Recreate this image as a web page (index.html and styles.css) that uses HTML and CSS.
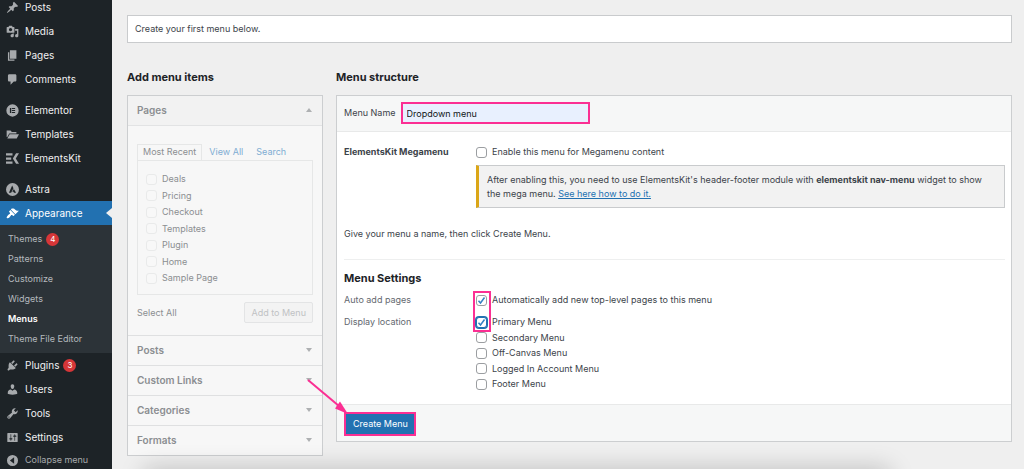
FILE: index.html
```html
<!DOCTYPE html>
<html lang="en">
<head>
<meta charset="utf-8">
<title>Menus</title>
<link rel="stylesheet" href="styles.css">
</head>
<body>
<div class="admin">
  <nav class="sidebar" aria-label="Main menu">
    <a class="nav-item" href="#"><svg class="icon" viewBox="0 0 20 20"><path d="M10.44 3.02l1.82-1.82 6.36 6.35-1.83 1.82c-1.05-.68-2.48-.57-3.41.36l-.75.75c-.92.93-1.04 2.35-.35 3.41l-1.83 1.82-2.41-2.41-2.8 2.79c-.42.42-3.38 2.71-3.8 2.29s1.86-3.39 2.28-3.81l2.79-2.79L4.1 9.36l1.83-1.82c1.05.69 2.48.57 3.4-.36l.75-.75c.93-.92 1.05-2.35.36-3.41z"/></svg>Posts</a>
    <a class="nav-item" href="#"><svg class="icon" viewBox="0 0 20 20"><path d="M13 11V4c0-.55-.45-1-1-1h-1.67L9 1H5L3.67 3H2c-.55 0-1 .45-1 1v7c0 .55.45 1 1 1h10c.55 0 1-.45 1-1zM7 4.5c1.38 0 2.5 1.12 2.5 2.5S8.38 9.5 7 9.5 4.5 8.38 4.5 7 5.62 4.5 7 4.5zM14 6h5v10.500c0 1.38-1.12 2.5-2.5 2.500S14 17.880 14 16.500s1.120-2.500 2.500-2.500c.17 0 .34.02.5.05V9h-3V6zm-4 8.050V13h2v3.500c0 1.380-1.120 2.500-2.500 2.500S7 17.880 7 16.500 8.120 14 9.500 14c.17 0 .34.02.5.05z" fill-rule="evenodd"/></svg>Media</a>
    <a class="nav-item" href="#"><svg class="icon" viewBox="0 0 20 20"><path d="M6 15V2h10v13H6zm-1 1h8v2H3V5h2v11z"/></svg>Pages</a>
    <a class="nav-item" href="#"><svg class="icon" viewBox="0 0 20 20"><path d="M5 2h9c1.100 0 2 .9 2 2v7c0 1.100-.9 2-2 2h-2l-5 5v-5H5c-1.100 0-2-.9-2-2V4c0-1.100.9-2 2-2z"/></svg>Comments</a>
    <a class="nav-item group-start" href="#"><svg class="icon" viewBox="0 0 20 20"><path fill-rule="evenodd" d="M10 .5a9.500 9.500 0 1 0 0 19a9.500 9.500 0 0 0 0-19zM6 6h2v8H6zM9 6h5v1.600H9zM9 9.200h5v1.600H9zM9 12.400h5V14H9z"/></svg>Elementor</a>
    <a class="nav-item" href="#"><svg class="icon" viewBox="0 0 20 20"><path d="M1 4h6l2 2h7v2.500H5L2 14H1zM5.600 9.500H20L16.500 16H2z"/></svg>Templates</a>
    <a class="nav-item" href="#"><svg class="icon" viewBox="0 0 20 20"><path d="M0 2h10v3.500H0zM0 8.300h8v3.500H0zM0 14.500h10V18H0zM15.500 2H20l-5 8 5 8h-4.500l-5-8z"/></svg>ElementsKit</a>
    <a class="nav-item group-start" href="#"><svg class="icon" viewBox="0 0 20 20"><path fill-rule="evenodd" d="M10 0a10 10 0 1 0 0 20a10 10 0 0 0 0-20zM9.500 4l2 4-3.600 7H4.500zM12.100 9.200L15.500 15h-3.200l-.8-1.700H9.700z"/></svg>Astra</a>
    <a class="nav-item current" href="#"><svg class="icon" viewBox="0 0 20 20"><path d="M14.480 11.060L7.410 3.990l1.500-1.500c.5-.56 2.300-.47 3.510.32 1.210.8 1.430 1.280 2.910 2.100 1.180.64 2.450 1.260 4.450.85zm-.71.71L6.700 4.700 4.930 6.470c-.39.39-.39 1.020 0 1.410l1.060 1.060c.39.39.39 1.030 0 1.420-.6.6-1.430 1.110-2.210 1.690-.35.26-.7.53-1.010.84C1.430 14.230.4 16.080 1.400 17.070c.99 1 2.840-.03 4.180-1.360.31-.31.58-.66.85-1.020.57-.78 1.080-1.610 1.690-2.210.39-.39 1.020-.39 1.410 0l1.060 1.060c.39.39 1.020.39 1.410 0z"/></svg>Appearance</a>
    <div class="submenu">
      <a href="#">Themes <span class="count">4</span></a>
      <a href="#">Patterns</a>
      <a href="#">Customize</a>
      <a href="#">Widgets</a>
      <a class="here" href="#">Menus</a>
      <a href="#">Theme File Editor</a>
    </div>
    <a class="nav-item" href="#"><svg class="icon" viewBox="0 0 20 20"><path d="M13.110 4.360L9.870 7.600 8 5.730l3.240-3.240c.35-.34 1.050-.2 1.560.32.52.51.66 1.210.31 1.550zm-8 1.770l.91-1.120 9.010 9.010-1.190.84c-.71.71-2.630 1.160-3.820 1.160H6.140L4.900 17.260c-.59.59-1.540.59-2.120 0-.59-.58-.59-1.530 0-2.120l1.240-1.240v-3.880c0-1.130.4-3.190 1.090-3.890zm7.260 3.970l3.240-3.240c.34-.35 1.040-.21 1.550.31.52.51.66 1.210.31 1.550l-3.240 3.250z"/></svg>Plugins <span class="count">3</span></a>
    <a class="nav-item" href="#"><svg class="icon" viewBox="0 0 20 20"><path d="M10 9.250c-2.270 0-2.730-3.440-2.730-3.440C7 4.020 7.820 2 9.970 2c2.160 0 2.980 2.020 2.710 3.810 0 0-.41 3.440-2.680 3.440zm0 2.570L12.720 10c2.390 0 4.520 2.330 4.520 4.530v2.490s-3.650 1.130-7.240 1.130c-3.650 0-7.240-1.130-7.240-1.130v-2.490c0-2.250 1.940-4.480 4.470-4.480z"/></svg>Users</a>
    <a class="nav-item" href="#"><svg class="icon" viewBox="0 0 20 20"><path d="M16.680 9.770c-1.340 1.340-3.300 1.670-4.950.99l-5.410 6.520c-.99.99-2.590.99-3.580 0s-.99-2.590 0-3.570l6.520-5.420c-.68-1.650-.35-3.610.99-4.950 1.280-1.280 3.120-1.620 4.720-1.060l-2.890 2.890 2.820 2.820 2.860-2.870c.53 1.580.18 3.390-1.080 4.650zM3.810 16.210c.4.39 1.040.39 1.430 0 .4-.4.4-1.040 0-1.430-.39-.4-1.030-.4-1.430 0-.39.39-.39 1.030 0 1.430z"/></svg>Tools</a>
    <a class="nav-item" href="#"><svg class="icon" viewBox="0 0 20 20"><path fill-rule="evenodd" d="M18 16V4c0-.55-.45-1-1-1H3c-.55 0-1 .45-1 1v12c0 .55.45 1 1 1h14c.55 0 1-.45 1-1zM8 11h1c.55 0 1 .45 1 1s-.45 1-1 1H8v1.500c0 .28-.22.5-.5.5s-.5-.22-.5-.5V13H6c-.55 0-1-.45-1-1s.45-1 1-1h1V5.500c0-.28.22-.5.5-.5s.5.22.5.5V11zm5-2h-1c-.55 0-1-.45-1-1s.45-1 1-1h1V5.500c0-.28.22-.5.5-.5s.5.22.5.5V7h1c.55 0 1 .45 1 1s-.45 1-1 1h-1v5.500c0 .28-.22.5-.5.5s-.5-.22-.5-.5V9z"/></svg>Settings</a>
    <button class="nav-item collapse" type="button"><svg class="icon" viewBox="0 0 20 20"><path fill-rule="evenodd" d="M10 1.500a8.500 8.500 0 1 0 0 17a8.500 8.500 0 0 0 0-17zM12.500 5v10L6 10z"/></svg>Collapse menu</button>
  </nav>

  <main class="content">
    <p class="intro">Create your first menu below.</p>
    <div class="columns">
      <section class="add-items">
        <h2>Add menu items</h2>
        <div class="accordion">
          <button class="acc-head open" type="button">Pages<span class="arrow up"></span></button>
          <div class="acc-body">
            <div class="tabs">
              <a class="tab selected" href="#">Most Recent</a>
              <a class="tab" href="#">View All</a>
              <a class="tab" href="#">Search</a>
            </div>
            <div class="page-list">
              <label><input type="checkbox" disabled>Deals</label>
              <label><input type="checkbox" disabled>Pricing</label>
              <label><input type="checkbox" disabled>Checkout</label>
              <label><input type="checkbox" disabled>Templates</label>
              <label><input type="checkbox" disabled>Plugin</label>
              <label><input type="checkbox" disabled>Home</label>
              <label><input type="checkbox" disabled>Sample Page</label>
            </div>
            <div class="acc-actions">
              <span>Select All</span>
              <button class="add-button" type="button" disabled>Add to Menu</button>
            </div>
          </div>
          <button class="acc-head" type="button">Posts<span class="arrow"></span></button>
          <button class="acc-head" type="button">Custom Links<span class="arrow"></span></button>
          <button class="acc-head" type="button">Categories<span class="arrow"></span></button>
          <button class="acc-head" type="button">Formats<span class="arrow"></span></button>
        </div>
      </section>

      <section class="structure">
        <h2>Menu structure</h2>
        <form class="panel">
          <div class="panel-head">
            <label for="menu-name">Menu Name</label>
            <input class="menu-name" id="menu-name" type="text" value="Dropdown menu">
          </div>
          <div class="panel-body">
            <div class="setting mega">
              <strong>ElementsKit Megamenu</strong>
              <div>
                <label class="check"><input type="checkbox">Enable this menu for Megamenu content</label>
                <p class="notice">After enabling this, you need to use ElementsKit's header-footer module with <b>elementskit nav-menu</b> widget to show the mega menu. <a href="#">See here how to do it.</a></p>
              </div>
            </div>
            <p class="hint">Give your menu a name, then click Create Menu.</p>
            <div class="settings">
              <h3>Menu Settings</h3>
              <div class="setting">
                <span class="legend">Auto add pages</span>
                <div class="marked">
                  <label class="check"><input type="checkbox" checked>Automatically add new top-level pages to this menu</label>
                </div>
              </div>
              <div class="setting">
                <span class="legend">Display location</span>
                <div class="locations">
                  <label class="check"><input class="focused" type="checkbox" checked>Primary Menu</label>
                  <label class="check"><input type="checkbox">Secondary Menu</label>
                  <label class="check"><input type="checkbox">Off-Canvas Menu</label>
                  <label class="check"><input type="checkbox">Logged In Account Menu</label>
                  <label class="check"><input type="checkbox">Footer Menu</label>
                </div>
              </div>
            </div>
          </div>
          <div class="panel-foot">
            <div class="create-wrap">
              <button class="create" type="button">Create Menu</button>
              <svg class="pointer" viewBox="0 0 42 36"><path d="M1 1L32 27" stroke="#fb2f93" stroke-width="2" fill="none"/><path d="M41 35L28 29.500L33 22.500z" fill="#fb2f93"/></svg>
            </div>
          </div>
        </form>
      </section>
    </div>
  </main>
</div>
</body>
</html>
```
FILE: styles.css
```css
*, *::before, *::after { box-sizing: border-box; }

body {
  margin: 0;
  height: 100vh;
  overflow: hidden;
  background: #efefef;
  color: #3c434a;
  font: 9px/14px Inter, "Liberation Sans", sans-serif;
}

h2, h3, p { margin: 0; }
button, input { font: inherit; color: inherit; }

.admin { display: flex; align-items: flex-start; }

/* Sidebar */
.sidebar {
  flex: 0 0 112px;
  margin-top: -5px;
  padding-bottom: 8px;
  background: #1d2327;
}
.nav-item {
  display: flex;
  align-items: center;
  width: 100%;
  height: 24px;
  padding: 0 0 0 6px;
  border: 0;
  background: none;
  color: #f0f0f1;
  font-size: 10px;
  text-decoration: none;
}
.icon { width: 13px; height: 13px; margin-right: 6px; fill: #a7aaad; }
.group-start { margin-top: 7px; }
.current { position: relative; background: #2271b1; color: #fff; }
.current .icon { fill: #fff; }
.current::after {
  content: "";
  position: absolute;
  right: 0;
  top: 7px;
  border: 5px solid transparent;
  border-left: 0;
  border-right: 6px solid #efefef;
}
.submenu { padding: 4px 0; background: #2c3338; }
.submenu a {
  display: flex;
  align-items: center;
  height: 20px;
  padding-left: 8px;
  color: #b4b9be;
  text-decoration: none;
}
.submenu .here { color: #fff; font-weight: 600; }
.count {
  width: 13px;
  margin-left: 4px;
  border-radius: 7px;
  background: #d63638;
  color: #fff;
  font-size: 8px;
  line-height: 13px;
  text-align: center;
}
.collapse { height: 22px; color: #a7aaad; font-size: 9px; }

/* Content */
.content { flex: 1; min-width: 0; padding: 15px 12px 12px 15px; }
.intro {
  padding: 6px 7px;
  border: 1px solid #c9cbcd;
  background: #fff;
}
.columns { display: flex; gap: 13px; margin-top: 26px; }
h2, h3 { color: #1d2327; font-size: 11px; font-weight: 700; line-height: 16px; }
h2 { margin-bottom: 10px; }

/* Left accordion */
.add-items { flex: 0 0 196px; }
.accordion { border: 1px solid #ccced0; background: #f7f7f7; }
.acc-head {
  display: flex;
  align-items: center;
  justify-content: space-between;
  width: 100%;
  height: 30px;
  padding: 0 10px 2px 9px;
  border: 0;
  border-top: 1px solid #dfe0e1;
  background: none;
  color: #8b8e91;
  font-size: 10px;
  font-weight: 600;
}
.acc-head.open { border-top: 0; border-bottom: 1px solid #e2e3e4; background: #f2f2f2; }
.arrow { border: 3px solid transparent; border-top: 4px solid #aeb0b2; border-bottom: 0; }
.arrow.up { border-top: 0; border-bottom: 4px solid #aeb0b2; }
.acc-body { padding: 18px 9px 12px; color: #8b8e91; }
.tabs { display: flex; }
.tab { padding: 0 5px 1px; border: 1px solid transparent; border-bottom: 0; color: #80add3; text-decoration: none; }
.tab + .tab { margin-left: 1px; }
.tab.selected { border-color: #e6e7e7; color: #8b8e91; }
.page-list {
  display: flex;
  flex-direction: column;
  justify-content: space-between;
  min-height: 135px;
  padding: 10px 8px 8px;
  border: 1px solid #e6e7e7;
}
.page-list label { display: flex; align-items: center; gap: 5px; line-height: 16px; }
.acc-actions { display: flex; align-items: center; justify-content: space-between; margin-top: 7px; }
.add-button {
  height: 21px;
  padding: 0 6px;
  border: 1px solid #e3e4e5;
  border-radius: 2px;
  background: #f3f3f3;
  color: #c0c2c4;
}

/* Check boxes */
input[type="checkbox"] {
  flex: none;
  appearance: none;
  width: 11px;
  height: 11px;
  margin: 0;
  border: 1px solid #9b9ea1;
  border-radius: 3px;
  background: #fff;
}
input[type="checkbox"]:disabled { border-color: #e9eaea; background: #f8f8f8; }
input[type="checkbox"]:checked {
  background: #fff url("data:image/svg+xml,%3Csvg xmlns='http://www.w3.org/2000/svg' viewBox='0 0 9 9'%3E%3Cpath d='M1.500 4.800L3.500 7L7.500 1.500' fill='none' stroke='%233582c4' stroke-width='1.500'/%3E%3C/svg%3E") center / 9px 9px no-repeat;
}
input[type="checkbox"].focused { border-color: #2271b1; box-shadow: 0 0 0 1px #2271b1; }
.check { display: flex; align-items: center; gap: 5px; }

/* Right panel */
.structure { flex: 1; min-width: 0; }
.panel { border: 1px solid #ccced0; background: #fff; }
.panel-head {
  display: flex;
  align-items: center;
  gap: 5px;
  padding: 6px 7px 7px;
  border-bottom: 1px solid #e8e9e9;
  background: #f6f7f7;
}
.menu-name {
  width: 189px;
  height: 22px;
  padding: 0 4px;
  border: 2px solid #fb2f93;
  background: #e8f0fe;
  color: #101517;
}
.panel-body { padding: 13px 6px 13px 7px; }
.setting { display: grid; grid-template-columns: 132px 1fr; }
.notice {
  margin-top: 6px;
  padding: 7px 8px 6px;
  border: 1px solid #c9cbcd;
  border-left: 3px solid #dba617;
  background: #f2f2f2;
}
.notice a { color: #2271b1; }
.hint { margin-top: 19px; }
.settings { margin-top: 18px; padding-top: 10px; border-top: 1px solid #eeefef; }
.settings .setting { margin-top: 8px; }
.settings h3 { margin-bottom: -1px; }
.legend { color: #646970; }
.locations {
  display: flex;
  flex-direction: column;
  justify-content: space-between;
  min-height: 76px;
}
.marked { position: relative; }
.marked::before {
  content: "";
  position: absolute;
  left: -3px;
  top: -2px;
  width: 18px;
  height: 41px;
  border: 2px solid #fb2f93;
}
.panel-foot {
  display: flex;
  padding: 7px 7px 5px;
  border-top: 1px solid #e8e9e9;
  background: #f6f7f7;
}
.create-wrap { position: relative; }
.create {
  height: 24px;
  padding: 0 6px 0 7px;
  border: 2px solid #fb2f93;
  background: #2271b1;
  color: #fff;
}
.pointer { position: absolute; right: 67px; bottom: 21px; width: 42px; height: 36px; pointer-events: none; }

body::after {
  content: "";
  position: absolute;
  left: 150px;
  right: 140px;
  bottom: -16px;
  height: 10px;
  box-shadow: 0 0 24px 6px #00000038;
}
```
